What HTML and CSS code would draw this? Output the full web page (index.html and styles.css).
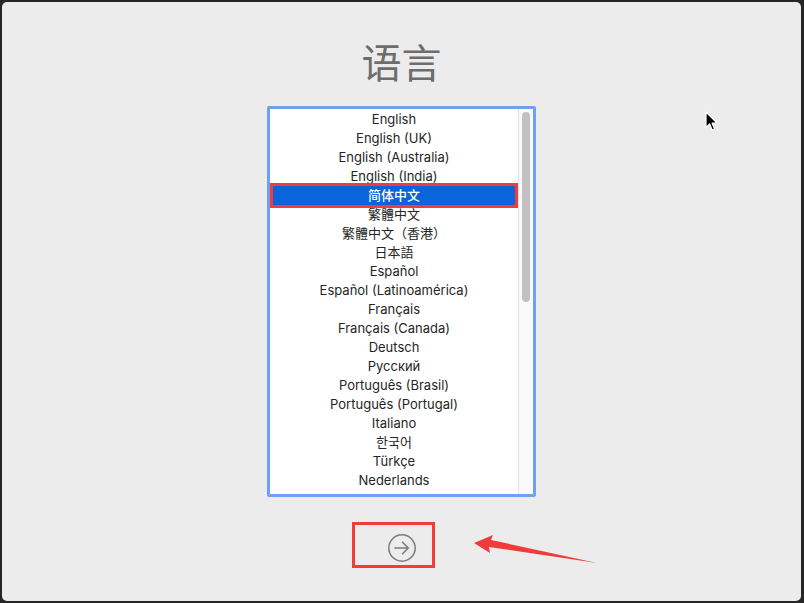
FILE: index.html
```html
<!DOCTYPE html>
<html lang="zh">
<head>
<meta charset="utf-8">
<title>语言</title>
<link rel="stylesheet" href="styles.css">
</head>
<body>
<div class="window">
  <h1 class="title">语言</h1>
  <div class="listbox">
    <ul class="list">
      <li>English</li>
      <li>English (UK)</li>
      <li>English (Australia)</li>
      <li>English (India)</li>
      <li class="selected">简体中文</li>
      <li>繁體中文</li>
      <li>繁體中文（香港）</li>
      <li>日本語</li>
      <li>Español</li>
      <li>Español (Latinoamérica)</li>
      <li>Français</li>
      <li>Français (Canada)</li>
      <li>Deutsch</li>
      <li>Русский</li>
      <li>Português (Brasil)</li>
      <li>Português (Portugal)</li>
      <li>Italiano</li>
      <li>한국어</li>
      <li>Türkçe</li>
      <li>Nederlands</li>
    </ul>
    <div class="scrollbar"><div class="thumb"></div></div>
    <div class="mark mark-row"></div>
  </div>
  <div class="actions">
    <button class="next" aria-label="继续">
      <svg width="30" height="30" viewBox="0 0 30 30">
        <circle cx="15" cy="15" r="13.2" fill="none" stroke="#7b7b7b" stroke-width="1.5"/>
        <path d="M8 15 H21 M15.5 9.2 L21.3 15 L15.5 20.8" fill="none" stroke="#7b7b7b" stroke-width="1.6" stroke-linecap="round" stroke-linejoin="round"/>
      </svg>
    </button>
    <div class="mark mark-btn"></div>
  </div>
  <svg class="annot-arrow" width="804" height="603" viewBox="0 0 804 603">
    <polygon points="474,543 493,535 491,540 597,563 489,547 490,553" fill="#f03b3b"/>
  </svg>
  <svg class="cursor" width="14" height="22" viewBox="0 0 14 22">
    <path d="M1 1 L1 16.5 L4.6 13 L7.2 19 L9.6 18 L7.1 12.2 L12 12.2 Z" fill="#000" stroke="#fff" stroke-width="1.2" stroke-linejoin="round"/>
  </svg>
</div>
</body>
</html>
```
FILE: styles.css
```css
html, body {
  margin: 0;
  padding: 0;
  background: #262626;
}
body {
  width: 804px;
  height: 603px;
  overflow: hidden;
  font-family: "Inter", "Liberation Sans", "Noto Sans CJK SC", sans-serif;
}
.window {
  position: relative;
  margin: 2px 3px 2px 2px;
  height: 599px;
  background: #ececec;
  border-radius: 5px;
  display: flex;
  flex-direction: column;
  align-items: center;
}
.title {
  margin: 35px 0 0 0;
  font-family: "Noto Sans CJK SC", sans-serif;
  font-weight: 400;
  font-size: 40px;
  line-height: 49px;
  color: #6d6d6d;
  letter-spacing: 0;
}
.listbox {
  position: relative;
  margin-top: 20px;
  width: 263px;
  height: 385px;
  border: 3px solid #6fa1ef;
  border-radius: 2px;
  background: #fff;
  display: flex;
  overflow: hidden;
}
.list {
  list-style: none;
  margin: 0;
  padding: 1px 0 0 0;
  flex: 1;
  font-size: 13px;
  color: #252525;
}
.list li {
  height: 19px;
  line-height: 19px;
  text-align: center;
  margin: 0 2px;
  white-space: nowrap;
}
.list li.selected {
  background: #0a64da;
  color: #fff;
  font-weight: 500;
}
.scrollbar {
  width: 14px;
  border-left: 1px solid #e3e3e3;
  background: #fafafa;
  padding-top: 3px;
  display: flex;
  justify-content: center;
}
.thumb {
  width: 8px;
  height: 190px;
  border-radius: 4px;
  background: #c1c1c1;
}
.mark {
  position: absolute;
  border: 3px solid #f23b3b;
  box-sizing: border-box;
}
.mark-row {
  left: 0;
  top: 74px;
  width: 248px;
  height: 25px;
}
.actions {
  position: relative;
  width: 83px;
  height: 46px;
  margin-top: 25px;
  margin-right: 16px;
  display: flex;
  align-items: center;
  justify-content: center;
}
.next {
  border: 0;
  background: transparent;
  padding: 0;
  width: 30px;
  height: 30px;
  margin-left: 16px;
  margin-top: 6px;
}
.mark-btn {
  left: 0;
  top: 0;
  width: 83px;
  height: 46px;
}
.annot-arrow {
  position: absolute;
  left: -2px;
  top: -2px;
  pointer-events: none;
}
.cursor {
  position: absolute;
  left: 703px;
  top: 109px;
}
```
